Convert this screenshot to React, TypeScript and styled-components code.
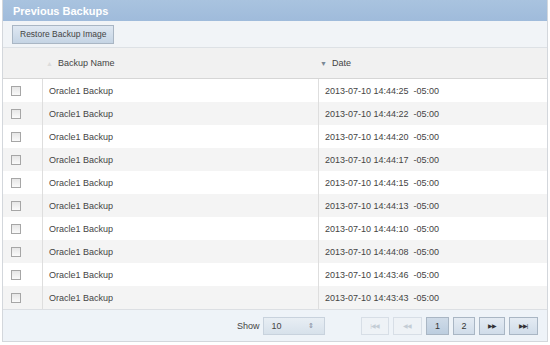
import { Fragment } from "react";
import styled, { createGlobalStyle } from "styled-components";

const Global = createGlobalStyle`
    body {
        margin: 0;
        font-family: "Liberation Sans", Arial, sans-serif;
        background: #ffffff;
    }
`;

const Panel = styled.div`
    width: 544px;
    margin: 0 0 0 2px;
    border: 1px solid #d3d7dc;
    border-top: none;
`;

const TitleBar = styled.div`
    height: 21px;
    display: flex;
    align-items: center;
    padding-left: 10px;
    background: linear-gradient(#a9c3df, #9fbbdb);
    color: #ffffff;
    font-size: 11px;
    font-weight: bold;
`;

const Toolbar = styled.div`
    height: 26px;
    display: flex;
    align-items: center;
    padding-left: 9px;
    background: #f1f4f7;
    border-bottom: 1px solid #dde1e5;
`;

const Button = styled.button`
    height: 19px;
    padding: 0 7px;
    border: 1px solid #a9b6c4;
    background: linear-gradient(#dfe8f2, #c5d4e4);
    color: #444;
    font-family: inherit;
    font-size: 8.5px;
`;

const Table = styled.div`
    display: grid;
    grid-template-columns: 39px 276px 1fr;
`;

const HeadCell = styled.div<{ $pad?: number }>`
    height: 30px;
    display: flex;
    align-items: center;
    background: #f1f1f1;
    border-bottom: 1px solid #d6d6d6;
    font-size: 9px;
    color: #444;
    padding-left: ${(p) => p.$pad ?? 0}px;
`;

const Cell = styled.div<{ $alt: boolean; $sep?: boolean }>`
    height: 23px;
    display: flex;
    align-items: center;
    background: ${(p) => (p.$alt ? "#f4f4f4" : "#ffffff")};
    border-left: ${(p) => (p.$sep ? "1px solid #dedede" : "none")};
    font-size: 9px;
    color: #444;
    padding-left: 6px;
`;

const Check = styled.span`
    width: 8px;
    height: 8px;
    margin-left: 2px;
    border: 1px solid #a6a6a6;
    background: linear-gradient(#e6e6e6, #fafafa);
`;

const Sort = styled.span<{ $active?: boolean }>`
    margin-right: 5px;
    font-size: 7px;
    color: ${(p) => (p.$active ? "#7a8896" : "#dcdcdc")};
`;

const Footer = styled.div`
    height: 31px;
    display: flex;
    align-items: center;
    background: #eef3f8;
    border-top: 1px solid #dcdfe3;
    font-size: 9px;
    color: #444;
    padding-left: 234px;
`;

const Select = styled.div`
    width: 62px;
    height: 18px;
    margin-left: 3px;
    margin-right: 36px;
    display: flex;
    align-items: center;
    justify-content: space-between;
    padding: 0 10px 0 8px;
    box-sizing: border-box;
    border: 1px solid #c8d2dd;
    background: linear-gradient(#e8eef4, #d7e1eb);
    font-size: 9px;
`;

const Pager = styled.div`
    display: flex;
    gap: 4px;
`;

const PageBtn = styled.div<{ $w: number; $off?: boolean; $cur?: boolean }>`
    width: ${(p) => p.$w}px;
    height: 18px;
    display: flex;
    align-items: center;
    justify-content: center;
    box-sizing: border-box;
    border: 1px solid ${(p) => (p.$off ? "#d7dee6" : "#a9b6c4")};
    background: ${(p) =>
        p.$cur ? "linear-gradient(#cfdbe8, #bccddf)" : p.$off ? "#eef2f6" : "linear-gradient(#e4ebf3, #d0dce9)"};
    color: ${(p) => (p.$off ? "#c4ccd5" : "#333")};
    font-size: ${(p) => (p.$cur !== undefined ? 9 : 6)}px;
    letter-spacing: -1px;
`;

const times = ["14:44:25", "14:44:22", "14:44:20", "14:44:17", "14:44:15", "14:44:13", "14:44:10", "14:44:08", "14:43:46", "14:43:43"];

export default function App() {
    return (
        <>
            <Global />
            <Panel>
                <TitleBar>Previous Backups</TitleBar>
                <Toolbar>
                    <Button>Restore Backup Image</Button>
                </Toolbar>
                <Table>
                    <HeadCell />
                    <HeadCell $pad={4}>
                        <Sort>▲</Sort>Backup Name
                    </HeadCell>
                    <HeadCell $pad={2}>
                        <Sort $active>▼</Sort>Date
                    </HeadCell>
                    {times.map((t, i) => (
                        <Fragment key={i}>
                            <Cell $alt={i % 2 === 1}>
                                <Check />
                            </Cell>
                            <Cell $alt={i % 2 === 1} $sep>
                                Oracle1 Backup
                            </Cell>
                            <Cell $alt={i % 2 === 1} $sep>
                                2013-07-10 {t}&nbsp; -05:00
                            </Cell>
                        </Fragment>
                    ))}
                </Table>
                <Footer>
                    Show
                    <Select>
                        10<Sort $active style={{ margin: 0 }}>⇕</Sort>
                    </Select>
                    <Pager>
                        <PageBtn $w={28} $off>|◀◀</PageBtn>
                        <PageBtn $w={29} $off>◀◀</PageBtn>
                        <PageBtn $w={23} $cur>1</PageBtn>
                        <PageBtn $w={22} $cur={false}>2</PageBtn>
                        <PageBtn $w={26}>▶▶</PageBtn>
                        <PageBtn $w={29}>▶▶|</PageBtn>
                    </Pager>
                </Footer>
            </Panel>
        </>
    );
}
